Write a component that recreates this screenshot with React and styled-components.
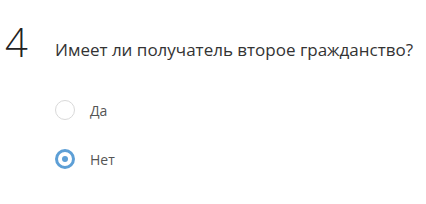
import React, { useState } from 'react';
import styled, { createGlobalStyle } from 'styled-components';

const GlobalStyle = createGlobalStyle`
  body {
    margin: 0;
    background: #fff;
    font-family: "Open Sans", "Noto Sans", sans-serif;
  }
`;

const Question = styled.section`
  padding: 18px 0 0 5px;
`;

const Header = styled.div`
  display: flex;
  align-items: flex-start;
`;

const Number = styled.div`
  width: 50px;
  font-size: 40px;
  font-weight: 300;
  line-height: 48px;
  color: #222;
`;

const Title = styled.h2`
  margin: 0;
  padding-top: 20px;
  font-size: 17px;
  font-weight: 400;
  line-height: 24px;
  color: #333;
`;

const Options = styled.div`
  display: flex;
  flex-direction: column;
  gap: 29px;
  padding: 34px 0 0 50px;
`;

const Option = styled.label`
  display: flex;
  align-items: center;
  gap: 15px;
  height: 20px;
  cursor: pointer;
  font-size: 14px;
  color: #555;
`;

const Radio = styled.span`
  box-sizing: border-box;
  width: 20px;
  height: 20px;
  border-radius: 50%;
  border: ${p => (p.$checked ? '3px solid #5d9fd6' : '1px solid #d9d9d9')};
  display: flex;
  align-items: center;
  justify-content: center;

  &::after {
    content: '';
    width: 6px;
    height: 6px;
    border-radius: 50%;
    background: #5d9fd6;
    display: ${p => (p.$checked ? 'block' : 'none')};
  }
`;

export default function App() {
  const [value, setValue] = useState('no');
  const options = [
    { id: 'yes', label: 'Да' },
    { id: 'no', label: 'Нет' },
  ];
  return (
    <>
      <GlobalStyle />
      <Question>
        <Header>
          <Number>4</Number>
          <Title>Имеет ли получатель второе гражданство?</Title>
        </Header>
        <Options>
          {options.map(o => (
            <Option key={o.id} onClick={() => setValue(o.id)}>
              <Radio $checked={value === o.id} />
              {o.label}
            </Option>
          ))}
        </Options>
      </Question>
    </>
  );
}
